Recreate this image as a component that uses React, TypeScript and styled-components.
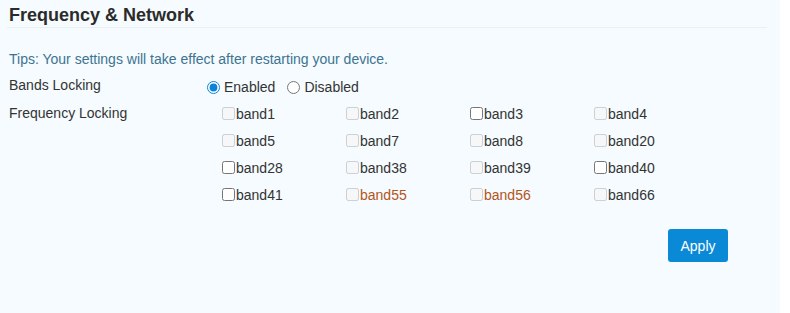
import { createGlobalStyle, styled } from "styled-components";

const GlobalStyle = createGlobalStyle`
  html, body {
    margin: 0;
    padding: 0;
    background: #ffffff;
  }
  body {
    font-family: "Liberation Sans", Arial, sans-serif;
    font-size: 14px;
    color: #333;
  }
`;

interface Band {
  name: string;
  enabled: boolean;
  warn?: boolean;
}

const bands: Band[] = [
  { name: "band1", enabled: false },
  { name: "band2", enabled: false },
  { name: "band3", enabled: true },
  { name: "band4", enabled: false },
  { name: "band5", enabled: false },
  { name: "band7", enabled: false },
  { name: "band8", enabled: false },
  { name: "band20", enabled: false },
  { name: "band28", enabled: true },
  { name: "band38", enabled: false },
  { name: "band39", enabled: false },
  { name: "band40", enabled: true },
  { name: "band41", enabled: true },
  { name: "band55", enabled: false, warn: true },
  { name: "band56", enabled: false, warn: true },
  { name: "band66", enabled: false },
];

export default function App() {
  return (
    <>
      <GlobalStyle />
      <Panel>
        <Header>
          <Title>Frequency &amp; Network</Title>
        </Header>
        <Body>
          <Tips>Tips: Your settings will take effect after restarting your device.</Tips>
          <FormRow>
            <Label>Bands Locking</Label>
            <RadioGroup>
              <RadioItem>
                <Radio type="radio" name="lock" defaultChecked />
                Enabled
              </RadioItem>
              <RadioItem>
                <Radio type="radio" name="lock" />
                Disabled
              </RadioItem>
            </RadioGroup>
          </FormRow>
          <FormRow>
            <Label>Frequency Locking</Label>
            <BandGrid>
              {bands.map((b) => (
                <BandItem key={b.name} $warn={b.warn}>
                  <Check type="checkbox" disabled={!b.enabled} />
                  {b.name}
                </BandItem>
              ))}
            </BandGrid>
          </FormRow>
          <Actions>
            <ApplyButton>Apply</ApplyButton>
          </Actions>
        </Body>
      </Panel>
    </>
  );
}

const Panel = styled.div`
  width: 780px;
  height: 313px;
  background: #f5fbfe;
  box-sizing: border-box;
  padding: 0 13px 0 7px;
`;

const Header = styled.div`
  height: 28px;
  box-sizing: border-box;
  border-bottom: 1px solid #eaf1ec;
  padding-left: 2px;
  display: flex;
  align-items: center;
`;

const Title = styled.h2`
  margin: 4px 0 0;
  font-size: 18px;
  font-weight: 700;
  color: #2b2b2b;
`;

const Body = styled.div`
  padding: 22px 0 0 2px;
`;

const Tips = styled.div`
  color: #3d7391;
  font-size: 14px;
  line-height: 18px;
  height: 18px;
`;

const FormRow = styled.div`
  display: grid;
  grid-template-columns: 198px 1fr;
  margin-top: 8px;
`;

const Label = styled.div`
  line-height: 18px;
  color: #333;
`;

const RadioGroup = styled.div`
  display: flex;
  gap: 12px;
  line-height: 18px;
`;

const RadioItem = styled.label`
  display: flex;
  align-items: center;
  gap: 4px;
  color: #333;
  padding-top: 2px;
`;

const Radio = styled.input`
  margin: 0;
  width: 13px;
  height: 13px;
  accent-color: #0b84d8;
`;

const BandGrid = styled.div`
  display: grid;
  grid-template-columns: repeat(4, 124px);
  grid-auto-rows: 27px;
  padding-left: 15px;
  margin-top: -4px;
`;

const BandItem = styled.label<{ $warn?: boolean }>`
  display: flex;
  align-items: center;
  color: ${(p) => (p.$warn ? "#b4541a" : "#333")};
`;

const Check = styled.input`
  margin: 0 1px 0 0;
  width: 13px;
  height: 13px;
`;

const Actions = styled.div`
  display: flex;
  justify-content: flex-end;
  padding-right: 39px;
  margin-top: 21px;
`;

const ApplyButton = styled.button`
  width: 60px;
  height: 33px;
  border: none;
  border-radius: 3px;
  background: #0a89d6;
  color: #fff;
  font-family: "Liberation Sans", Arial, sans-serif;
  font-size: 14px;
  cursor: pointer;
`;
